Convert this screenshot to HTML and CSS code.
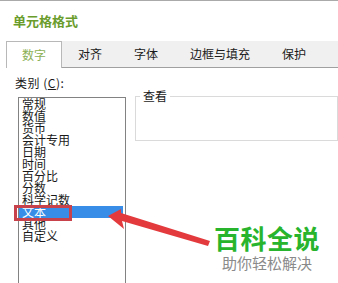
FILE: index.html
```html
<!DOCTYPE html>
<html>
	<head>
		<meta charset='utf-8'>
		<title>单元格格式</title>
		<link rel="stylesheet" href="styles.css">
	</head>
	<body>
		<div class='topline'></div>
		<div class='title'>单元格格式</div>
		<div class='tabs'>
			<div class='tab active'>数字</div>
			<div class='tab'>对齐</div>
			<div class='tab'>字体</div>
			<div class='tab'>边框与填充</div>
			<div class='tab'>保护</div>
		</div>
		<div class='content'>
			<div class='left'>
				<div class='label'>类别 (<u>C</u>):</div>
				<div class='listbox'>
					<div class='item'>常规</div>
					<div class='item'>数值</div>
					<div class='item'>货币</div>
					<div class='item'>会计专用</div>
					<div class='item'>日期</div>
					<div class='item'>时间</div>
					<div class='item'>百分比</div>
					<div class='item'>分数</div>
					<div class='item'>科学记数</div>
					<div class='item selected'>文本</div>
					<div class='item'>其他</div>
					<div class='item'>自定义</div>
					<div class='mark'></div>
				</div>
			</div>
			<fieldset class='preview'>
				<legend>查看</legend>
				<div class='preview-body'></div>
			</fieldset>
		</div>
		<svg class='arrow' width='338' height='283' viewBox='0 0 338 283'>
			<polygon points='108,216 121,209 121,213 210,241 208,246 122,221 124,229' fill='#e33a3d'/>
		</svg>
		<div class='brand'>
			<div class='brand-name'>百科全说</div>
			<div class='brand-sub'>助你轻松解决</div>
		</div>
	</body>
</html>
```

FILE: styles.css
```css
:root {
	--tab-bg: rgb(240, 240, 240);
	--line: rgb(160, 160, 160);
	--green: rgb(106, 156, 44);
	--blue: rgb(56, 142, 230);
	--red: rgb(200, 66, 76);
}
html, body {
	margin: 0;
	padding: 0;
	background-color: #fff;
	color: #1a1a1a;
	font-family: "Noto Sans CJK SC", "Noto Sans", sans-serif;
	font-size: 12px;
}
body {
	position: relative;
	width: 338px;
	height: 283px;
	overflow: hidden;
}
.topline {
	height: 1px;
	background-color: rgb(170, 170, 170);
}
.title {
	padding: 12px 0 0 13px;
	font-size: 13px;
	font-weight: 700;
	line-height: 16px;
	color: var(--green);
}
.tabs {
	display: flex;
	margin: 12px 0 0 6px;
	height: 26px;
	background-color: var(--tab-bg);
	border-bottom: 1px solid var(--line);
}
.tab {
	padding: 0 16px;
	line-height: 26px;
	white-space: nowrap;
}
.tab.active {
	padding: 0 15px;
	height: 26px;
	line-height: 25px;
	background-color: #fff;
	border: 1px solid rgb(184, 184, 184);
	border-bottom: 0;
	color: rgb(139, 176, 84);
}
.content {
	display: flex;
	align-items: flex-start;
	padding: 8px 0 0 15px;
}
.label {
	line-height: 14px;
	margin-bottom: 7px;
	letter-spacing: 0.5px;
}
.listbox {
	position: relative;
	margin-left: 3px;
	width: 106px;
	height: 186px;
	border: 1px solid rgb(130, 130, 130);
	border-bottom: 0;
}
.item {
	padding-left: 3px;
	line-height: 12px;
	height: 12px;
	white-space: nowrap;
}
.item.selected {
	margin-right: 2px;
	background-color: var(--blue);
	color: #fff;
}
.mark {
	position: absolute;
	left: -5px;
	top: 107px;
	width: 52px;
	height: 10px;
	border: 3px solid var(--red);
}
.preview {
	margin: 13px 0 0 9px;
	padding: 0 0 0 4px;
	width: 260px;
	border: 1px solid rgb(218, 218, 218);
}
.preview legend {
	padding: 0 3px;
	line-height: 14px;
}
.preview-body {
	height: 37px;
}
.arrow {
	position: absolute;
	left: 0;
	top: 0;
}
.brand {
	position: absolute;
	left: 214px;
	top: 222px;
	text-align: center;
}
.brand-name {
	font-size: 26px;
	font-weight: 700;
	line-height: 32px;
	color: rgb(40, 180, 44);
	letter-spacing: 0.5px;
}
.brand-sub {
	font-size: 15px;
	line-height: 18px;
	color: rgb(138, 138, 138);
}
```
